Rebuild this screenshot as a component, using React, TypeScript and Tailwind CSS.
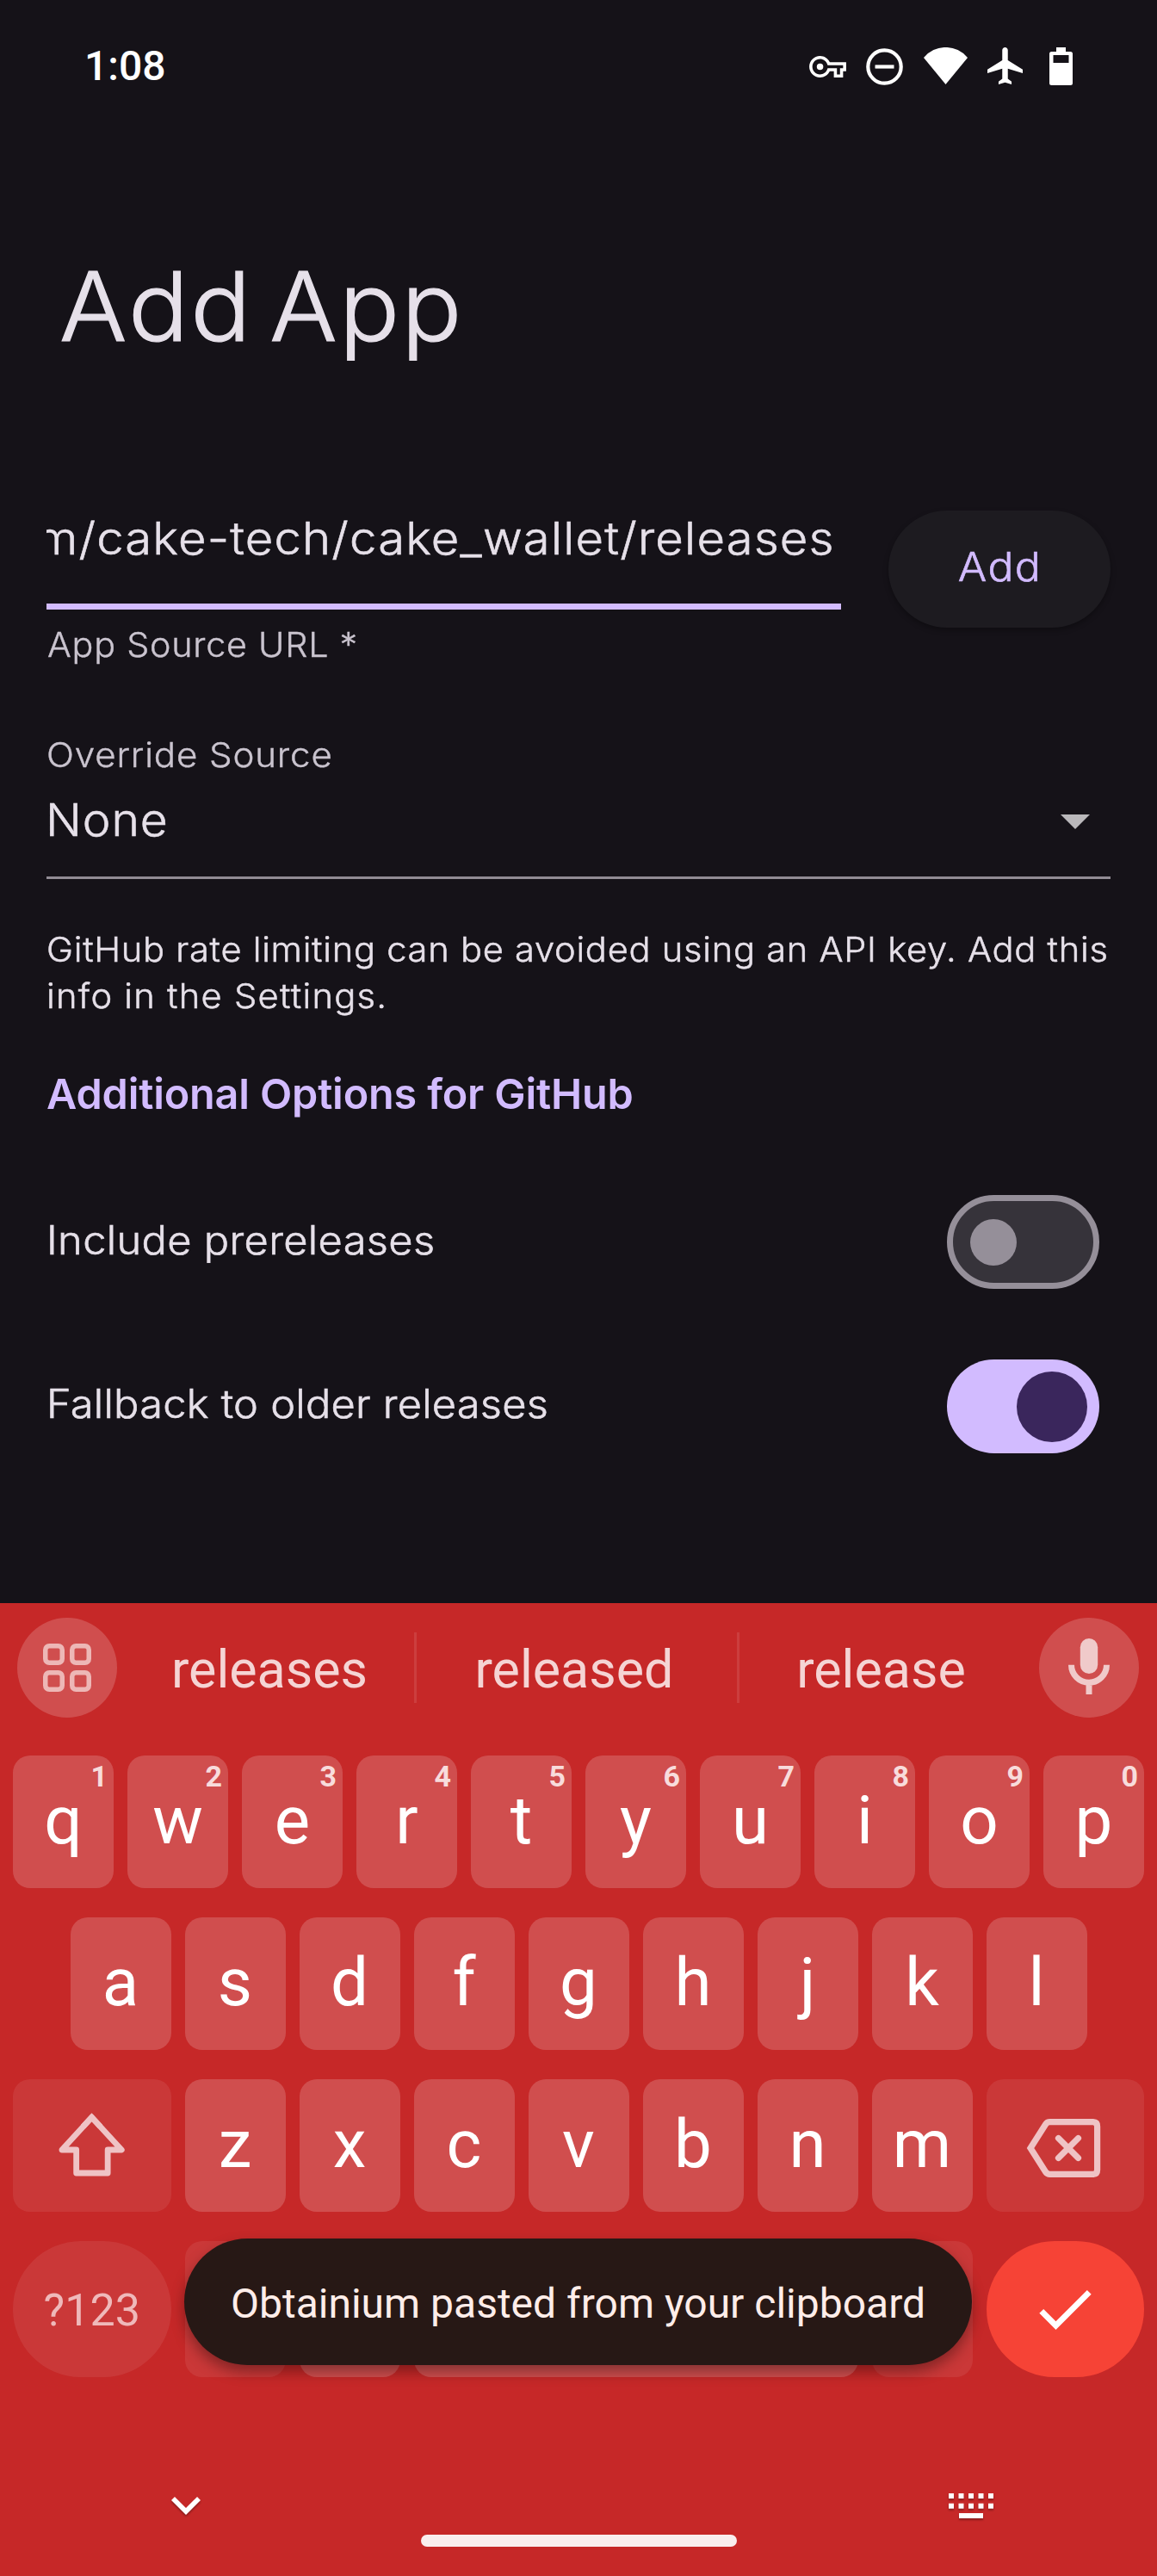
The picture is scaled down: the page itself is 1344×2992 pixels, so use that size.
import type { ReactNode } from "react";

const hints: Record<string, string> = {
  q: "1", w: "2", e: "3", r: "4", t: "5", y: "6", u: "7", i: "8", o: "9", p: "0",
};

function StatusBar() {
  return (
    <header className="flex h-[154px] items-center justify-between pr-[98px] pl-[98px] text-white">
      <span className="font-['Roboto',sans-serif] text-[48px] leading-none font-medium">1:08</span>
      <div className="flex items-center">
        <svg className="h-[25px] w-[43px]" viewBox="0 5 24 14" fill="currentColor">
          <path d="M22 19h-6v-4h-2.68c-1.14 2.42-3.6 4-6.32 4-3.86 0-7-3.14-7-7s3.14-7 7-7c2.72 0 5.17 1.58 6.32 4H24v6h-2v4zm-4-2h2v-4h2v-2H11.94l-.23-.67C11.01 8.34 9.11 7 7 7c-2.76 0-5 2.24-5 5s2.24 5 5 5c2.11 0 4.01-1.34 4.71-3.33l.23-.67H18v4z" />
          <circle cx="7" cy="12" r="2.1" />
        </svg>
        <svg className="ml-[23px] h-[43px] w-[43px]" viewBox="0 0 43 43" fill="none" stroke="currentColor" strokeWidth="4.2">
          <circle cx="21.5" cy="21.5" r="19.2" />
          <path d="M10.5 21.5h22" />
        </svg>
        <svg className="-mt-px ml-[24.5px] h-[43px] w-[51px]" viewBox="0 0 51 43" fill="currentColor">
          <path d="M0 12A33 33 0 0 1 51 12L25.5 43z" />
        </svg>
        <svg className="-mt-px ml-[23px] h-[43px] w-[41px]" viewBox="2 2 19 20" fill="currentColor" preserveAspectRatio="none">
          <path d="M21 16v-2l-8-5V3.5c0-.83-.67-1.5-1.5-1.5S10 2.67 10 3.5V9l-8 5v2l8-2.5V19l-2 1.5V22l3.5-1 3.5 1v-1.5L13 19v-5.5l8 2.5z" />
        </svg>
        <svg className="-mt-px ml-[31px] h-[44px] w-[27px]" viewBox="0 0 27 44" fill="currentColor" fillRule="evenodd">
          <path d="M8 0h11v5h5.500a2.500 2.500 0 0 1 2.500 2.500v34a2.500 2.500 0 0 1-2.500 2.500h-22a2.500 2.500 0 0 1-2.500-2.500v-34a2.500 2.500 0 0 1 2.500-2.500H8zM4.500 9v9h18V9z" />
        </svg>
      </div>
    </header>
  );
}

function Toggle({ on }: { on?: boolean }) {
  return on ? (
    <div className="mr-[13px] flex h-[109px] w-[177px] items-center justify-end rounded-full bg-[#d2bbff] pr-[14px]">
      <div className="size-[82px] rounded-full bg-[#3a265c]" />
    </div>
  ) : (
    <div className="mr-[13px] flex h-[109px] w-[177px] items-center rounded-full border-[7px] border-[#958f99] bg-[#36333a] pl-5">
      <div className="size-[54px] rounded-full bg-[#958f99]" />
    </div>
  );
}

function Key({ letter }: { letter: string }) {
  return (
    <div className="relative flex h-[154px] w-[117px] items-center justify-center rounded-[20px] bg-white/18 pb-[3px] text-[78px] leading-none text-white">
      {letter}
      {hints[letter] && (
        <span className="absolute top-[7px] right-[7px] text-[34px] leading-none font-bold text-[#f8dcdc]">
          {hints[letter]}
        </span>
      )}
    </div>
  );
}

function KeyRow({ children }: { children: ReactNode }) {
  return <div className="flex justify-center gap-4">{children}</div>;
}

const letters = (s: string) => s.split("").map((c) => <Key key={c} letter={c} />);

function Keyboard() {
  return (
    <section className="relative h-[1130px] bg-[#c62828] pt-[17px] font-['Roboto',sans-serif] font-normal">
      <div className="flex items-center pl-5 text-[61px] leading-none text-[#f5d4d4]">
        <div className="flex size-[116px] items-center justify-center rounded-full bg-white/18">
          <svg className="size-14 text-[#edb7b6]" viewBox="0 0 56 56" fill="none" stroke="currentColor" strokeWidth="5.500">
            <rect x="2.750" y="2.750" width="19.500" height="19.500" rx="4.500" />
            <rect x="33.750" y="2.750" width="19.500" height="19.500" rx="4.500" />
            <rect x="2.750" y="33.750" width="19.500" height="19.500" rx="4.500" />
            <rect x="33.750" y="33.750" width="19.500" height="19.500" rx="4.500" />
          </svg>
        </div>
        <span className="ml-[9px] w-[336px] pt-1 text-center">releases</span>
        <span className="h-[82px] w-[3px] bg-white/10" />
        <span className="w-[372px] pt-1 pr-[6px] text-center">released</span>
        <span className="h-[82px] w-[3px] bg-white/10" />
        <span className="w-[329px] pt-1 text-center">release</span>
        <div className="ml-[19px] flex size-[116px] items-center justify-center rounded-full bg-white/18 pb-[3px]">
          <svg className="h-[65px] w-[48px] text-[#f0caca]" viewBox="0 0 48 65" fill="none" stroke="currentColor">
            <rect x="13.800" y="0" width="20.400" height="41" rx="10.200" fill="currentColor" stroke="none" />
            <path d="M3.500 30.700a20.500 20.500 0 0 0 41 0M24 51v14" strokeWidth="7" />
          </svg>
        </div>
      </div>

      <div className="mt-[44px] flex flex-col gap-[34px]">
        <KeyRow>{letters("qwertyuiop")}</KeyRow>
        <KeyRow>{letters("asdfghjkl")}</KeyRow>
        <KeyRow>
          <div className="flex w-[183.5px] items-center justify-center rounded-[20px] bg-white/8">
            <svg className="h-[100px] w-[110px] text-[#efc3c5]" viewBox="1.750 2 110 100" fill="none" stroke="currentColor" strokeWidth="6.800">
              <path d="M56.300 19.200L91 57H74.900V84H38.400V57H21.700z" strokeLinejoin="round" />
              <path d="M46.300 30L56.300 19.200L66.300 30" />
            </svg>
          </div>
          {letters("zxcvbnm")}
          <div className="flex w-[183.5px] items-center justify-center rounded-[20px] bg-white/8">
            <svg className="h-[90px] w-[110px] text-[#efc3c5]" viewBox="2 -3 110 90" fill="none" stroke="currentColor" strokeWidth="7.200">
              <path d="M17 45L34.500 17.500Q36.300 14.700 39.500 14.700H89.500Q94.600 14.700 94.600 19.800V70.200Q94.600 75.300 89.500 75.300H39.500Q36.300 75.300 34.500 72.500z" />
              <path d="M49.500 33.500l23 23M72.500 33.500l-23 23" strokeLinecap="round" />
            </svg>
          </div>
        </KeyRow>
        <div className="flex h-[158px] justify-center gap-4">
          <div className="flex w-[183.5px] items-center justify-center rounded-full bg-white/8 pt-1 text-[52px] text-[#efb9ba]">
            ?123
          </div>
          <div className="w-[117px] rounded-[20px] bg-white/8" />
          <div className="w-[117px] rounded-[20px] bg-white/18" />
          <div className="w-[516px] rounded-[20px] bg-white/18" />
          <div className="w-[117px] rounded-[20px] bg-white/8" />
          <div className="flex w-[183.5px] items-center justify-center rounded-full bg-[#f64336] pt-[2px]">
            <svg className="h-[46px] w-[61px] text-white" viewBox="3.410 5.590 17.590 13.410" fill="currentColor">
              <path d="M9 16.170L4.830 12l-1.420 1.410L9 19 21 7l-1.410-1.410z" />
            </svg>
          </div>
        </div>
      </div>

      <div className="mt-[135px] flex h-[29px] items-center justify-between pr-[190px] pl-[199px] text-white">
        <svg className="h-[21px] w-[34px] drop-shadow-[0_2px_1px_rgba(0,0,0,0.3)]" viewBox="6 8.590 12 7.410" fill="currentColor">
          <path d="M16.590 8.590L12 13.170 7.410 8.590 6 10l6 6 6-6z" />
        </svg>
        <svg className="h-[29px] w-[52px] drop-shadow-[0_2px_1px_rgba(0,0,0,0.3)]" viewBox="0 0 52 29" fill="currentColor">
          {[0, 11.5, 23, 34.5, 46].map((x) => (
            <g key={x}>
              <rect x={x} y="0" width="6" height="6" />
              <rect x={x} y="11.700" width="6" height="6" />
            </g>
          ))}
          <rect x="12" y="23" width="28" height="6" />
        </svg>
      </div>
      <div className="mx-auto mt-[19px] h-[14px] w-[367px] rounded-full bg-[#faeeee]" />

      <div className="absolute top-[738px] left-[214px] flex h-[147px] w-[915px] items-center justify-center rounded-full bg-[#271815] pt-1 text-[48px] leading-none whitespace-nowrap text-[#ffede9] shadow-[0_8px_16px_rgba(0,0,0,0.35)]">
        Obtainium pasted from your clipboard
      </div>
    </section>
  );
}

export default function App() {
  return (
    <div className="h-[2992px] w-[1344px] overflow-hidden bg-[#151218] font-['Inter',sans-serif] font-light text-[#e6e0e9] [-webkit-text-stroke-color:currentColor]">
      <div className="h-[1862px]">
        <StatusBar />
        <h1 className="mt-[135px] ml-[69px] w-fit origin-left scale-x-[1.05] text-[111px] leading-[134px] tracking-[2px] [word-spacing:-14.4px] [-webkit-text-stroke-width:1.2px]">
          Add App
        </h1>

        <main className="mt-[170px] px-[54px] [-webkit-text-stroke-width:0.6px]">
          <div className="flex items-start justify-between">
            <div className="w-[923px]">
              <div className="flex justify-end overflow-hidden pt-px pr-[7px] text-[52px] leading-[64px] tracking-[1.1px] whitespace-nowrap">
                <span className="origin-right scale-x-[1.08]">m/cake-tech/cake_wallet/releases</span>
              </div>
              <div className="mt-[43px] h-[7px] bg-[#d2bbff]" />
              <div className="mt-[17px] ml-px w-fit origin-left scale-x-[1.05] text-[39.3px] leading-[48px] tracking-[0.73px] text-[#cac4cf] [-webkit-text-stroke-width:0.4px]">
                App Source URL *
              </div>
            </div>
            <button className="h-[136px] w-[258px] rounded-full bg-[#1d1b20] pb-[4px] pl-px text-[46.5px] font-light tracking-[1.3px] text-[#d2bbff] shadow-[0_3px_6px_rgba(0,0,0,0.3)]">
              <span className="inline-block scale-x-[1.07]">Add</span>
            </button>
          </div>

          <div className="mt-[80px] w-fit origin-left scale-x-[1.07] text-[39.3px] leading-[48px] tracking-[0.8px] text-[#cac4cf] [-webkit-text-stroke-width:0.4px]">
            Override Source
          </div>
          <div className="mt-[19px] flex items-center justify-between border-b-[3.5px] border-[#918b94] pb-[34px] text-[52.5px] leading-[64px]">
            <span className="-ml-px origin-left scale-x-[1.05] tracking-[0.9px]">None</span>
            <svg className="mt-[5px] mr-[24px] h-[17px] w-[34px]" viewBox="0 0 34 17" fill="#bab8bb">
              <path d="M0 0h34L17 17z" />
            </svg>
          </div>

          <p className="mt-[55px] w-fit origin-left scale-x-[1.06] text-[39.3px] leading-[54px] tracking-[0.68px] whitespace-nowrap [-webkit-text-stroke-width:0.5px]">
            GitHub rate limiting can be avoided using an API key. Add this
            <br />
            <span className="tracking-[1.2px]">info in the Settings.</span>
          </p>

          <h2 className="mt-[57px] text-[48.5px] leading-[60px] font-semibold tracking-[-0.15px] text-[#d2bbff] [-webkit-text-stroke-width:0px]">
            Additional Options for GitHub
          </h2>

          <div className="mt-[87px] flex items-center justify-between text-[46px]">
            <span className="origin-left scale-x-[1.06] pb-1 tracking-[0.32px]">Include prereleases</span>
            <Toggle />
          </div>
          <div className="mt-[82px] flex items-center justify-between text-[46px]">
            <span className="origin-left scale-x-[1.06] pb-[6px] tracking-[0.23px]">Fallback to older releases</span>
            <Toggle on />
          </div>
        </main>
      </div>
      <Keyboard />
    </div>
  );
}
